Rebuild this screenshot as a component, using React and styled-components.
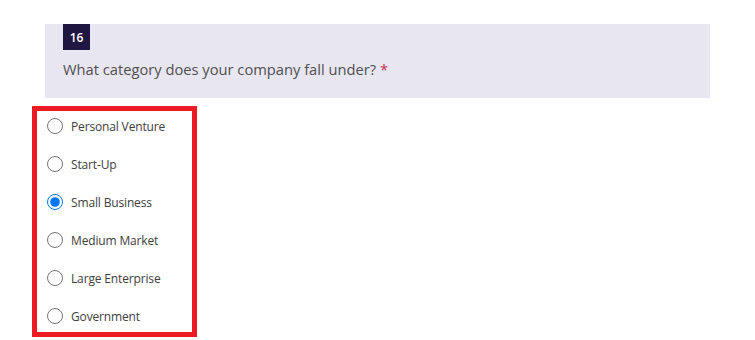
import React, { useState } from "react";
import styled, { createGlobalStyle } from "styled-components";

const Global = createGlobalStyle`
  html, body { margin: 0; padding: 0; background: #fff; }
  body { font-family: "Open Sans", "Noto Sans", sans-serif; }
`;

const Page = styled.div`
  width: 755px;
  height: 340px;
  padding-top: 24px;
  box-sizing: border-box;
  overflow: hidden;
`;

const QuestionPanel = styled.div`
  margin-left: 45px;
  width: 665px;
  height: 74px;
  background: #e8e6f1;
  padding-left: 18px;
  box-sizing: border-box;
  display: flex;
  flex-direction: column;
  align-items: flex-start;
`;

const Badge = styled.div`
  width: 27px;
  height: 26px;
  background: #1f1642;
  color: #fff;
  font-size: 12px;
  font-weight: 600;
  display: flex;
  align-items: center;
  justify-content: center;
`;

const QuestionText = styled.div`
  margin-top: 9px;
  font-size: 14.7px;
  color: #505050;
`;

const Required = styled.span`
  color: #c4314b;
  margin-left: 4px;
`;

const Highlight = styled.div`
  margin-left: 32px;
  margin-top: 8px;
  width: 165px;
  height: 231px;
  box-sizing: border-box;
  border: 5px solid #ed1c24;
  padding: 1px 0 0 10px;
  display: flex;
  flex-direction: column;
  gap: 10px;
`;

const Option = styled.label`
  height: 28px;
  display: flex;
  align-items: center;
  gap: 8px;
  font-size: 12px;
  color: #404040;
  letter-spacing: -0.15px;
  cursor: pointer;
`;

const Radio = styled.input`
  width: 16px;
  height: 16px;
  margin: 0;
`;

const options = [
  "Personal Venture",
  "Start-Up",
  "Small Business",
  "Medium Market",
  "Large Enterprise",
  "Government",
];

export default function App() {
  const [value, setValue] = useState("Small Business");
  return (
    <Page>
      <Global />
      <QuestionPanel>
        <Badge>16</Badge>
        <QuestionText>
          What category does your company fall under?<Required>*</Required>
        </QuestionText>
      </QuestionPanel>
      <Highlight>
        {options.map((o) => (
          <Option key={o}>
            <Radio
              type="radio"
              name="category"
              checked={value === o}
              onChange={() => setValue(o)}
            />
            {o}
          </Option>
        ))}
      </Highlight>
    </Page>
  );
}
